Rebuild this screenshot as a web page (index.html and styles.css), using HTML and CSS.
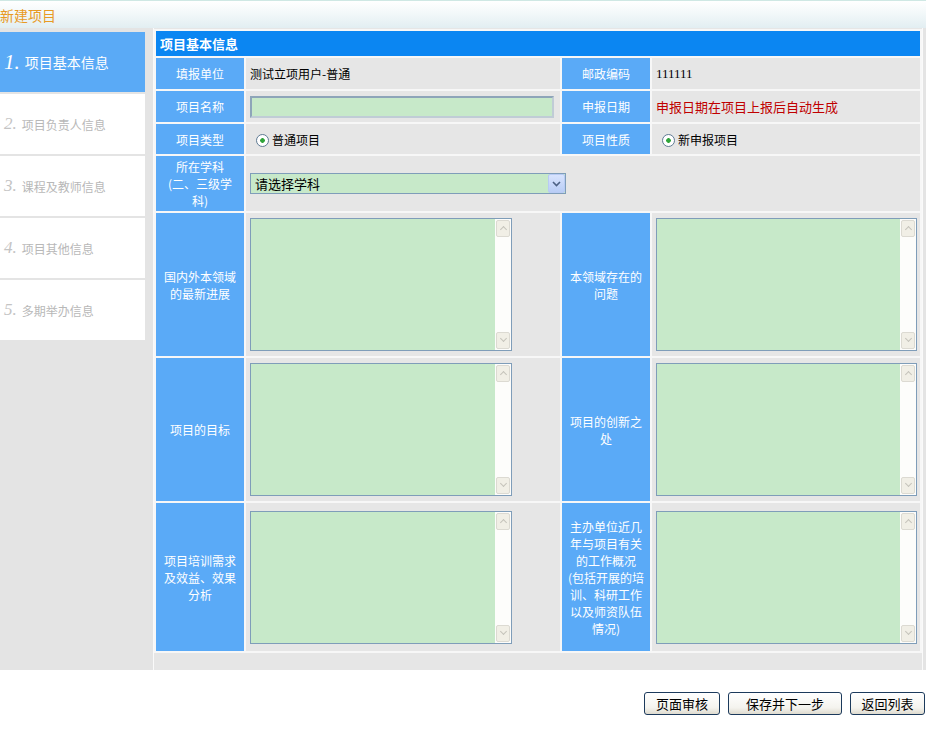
FILE: index.html
```html
<!DOCTYPE html>
<html>
<head>
<meta charset="utf-8">
<title>新建项目</title>
<link rel="stylesheet" href="styles.css">
</head>
<body>
<div class="topbar">新建项目</div>
<div class="wrap">
  <ul class="side">
    <li class="step on"><i>1.</i>项目基本信息</li>
    <li class="step"><i>2.</i>项目负责人信息</li>
    <li class="step"><i>3.</i>课程及教师信息</li>
    <li class="step"><i>4.</i>项目其他信息</li>
    <li class="step"><i>5.</i>多期举办信息</li>
  </ul>
  <div class="main">
    <table class="info">
      <colgroup>
        <col class="c-lab"><col class="c-val1"><col class="c-lab"><col class="c-val2">
      </colgroup>
      <tr class="r-head"><th colspan="4">项目基本信息</th></tr>
      <tr class="r1">
        <td class="lab">填报单位</td>
        <td class="val">测试立项用户-普通</td>
        <td class="lab">邮政编码</td>
        <td class="val num">111111</td>
      </tr>
      <tr class="r2">
        <td class="lab">项目名称</td>
        <td class="val"><input type="text" class="txt"></td>
        <td class="lab">申报日期</td>
        <td class="val red">申报日期在项目上报后自动生成</td>
      </tr>
      <tr class="r3">
        <td class="lab">项目类型</td>
        <td class="val"><span class="radio"></span>普通项目</td>
        <td class="lab">项目性质</td>
        <td class="val"><span class="radio"></span>新申报项目</td>
      </tr>
      <tr class="r4">
        <td class="lab">所在学科<br>(二、三级学<br>科)</td>
        <td class="val" colspan="3">
          <span class="sel">
            <select><option>请选择学科</option></select>
            <span class="sel-btn"><svg width="9" height="6" viewBox="0 0 9 6"><path d="M1 1l3.5 3.5L8 1" fill="none" stroke="#4d6185" stroke-width="1.6"/></svg></span>
          </span>
        </td>
      </tr>
      <tr class="r-big">
        <td class="lab">国内外本领域<br>的最新进展</td>
        <td class="val"><div class="ta"><textarea></textarea><div class="sbar"><span class="up"></span><span class="dn"></span></div></div></td>
        <td class="lab">本领域存在的<br>问题</td>
        <td class="val"><div class="ta ta2"><textarea></textarea><div class="sbar"><span class="up"></span><span class="dn"></span></div></div></td>
      </tr>
      <tr class="r-big">
        <td class="lab">项目的目标</td>
        <td class="val"><div class="ta"><textarea></textarea><div class="sbar"><span class="up"></span><span class="dn"></span></div></div></td>
        <td class="lab">项目的创新之<br>处</td>
        <td class="val"><div class="ta ta2"><textarea></textarea><div class="sbar"><span class="up"></span><span class="dn"></span></div></div></td>
      </tr>
      <tr class="r-last">
        <td class="lab">项目培训需求<br>及效益、效果<br>分析</td>
        <td class="val"><div class="ta"><textarea></textarea><div class="sbar"><span class="up"></span><span class="dn"></span></div></div></td>
        <td class="lab">主办单位近几<br>年与项目有关<br>的工作概况<br>(包括开展的培<br>训、科研工作<br>以及师资队伍<br>情况)</td>
        <td class="val"><div class="ta ta2"><textarea></textarea><div class="sbar"><span class="up"></span><span class="dn"></span></div></div></td>
      </tr>
    </table>
  </div>
</div>
<div class="btns">
  <button class="b1">页面审核</button>
  <button class="b2">保存并下一步</button>
  <button class="b3">返回列表</button>
</div>
</body>
</html>
```

FILE: styles.css
```css
body {
  margin: 0;
  padding: 0;
  font-family: "Noto Sans CJK SC", "DejaVu Sans", sans-serif;
  font-size: 12px;
  color: #000;
  background: #fff;
}
.topbar {
  height: 27px;
  line-height: 28px;
  border-top: 1px solid #cfe8e4;
  background: linear-gradient(#ffffff, #f4f9fa 40%, #e2eef2);
  color: #e89a24;
  font-size: 14px;
  padding-left: 0;
}
.wrap {
  display: flex;
  height: 642px;
  background: #e4e4e4;
}
.side {
  list-style: none;
  margin: 0;
  padding: 4px 0 0;
  width: 145px;
  flex: none;
}
.step {
  height: 60px;
  margin-bottom: 2px;
  background: #fff;
  color: #b8b8b8;
  display: flex;
  align-items: center;
  padding-left: 4px;
  font-size: 12px;
}
.step i {
  font-family: "Liberation Serif", serif;
  font-size: 17px;
  color: #c4c4c4;
  margin-right: 5px;
}
.step.on {
  background: #5aaaf6;
  color: #fff;
  font-size: 14px;
}
.step.on i {
  font-size: 21px;
  color: #fff;
  margin-right: 5px;
}
.main {
  margin-left: 8px;
  width: 768px;
  border-left: 1px solid #fafafa;
  border-right: 1px solid #fafafa;
  padding-top: 1px;
  background: #e6e6e6;
}
.info {
  width: 100%;
  border-collapse: separate;
  border-spacing: 2px;
  background: #f7f7f7;
}
.c-lab { width: 88px; }
.c-val1 { width: 314px; }
.info th {
  height: 25px;
  padding: 0 0 0 4px;
  background: #0b86f2;
  color: #fff;
  text-align: left;
  font-size: 13px;
  font-weight: bold;
}
.info td {
  padding: 0;
}
.lab {
  background: #5aaaf7;
  color: #fff;
  text-align: center;
  line-height: 17px;
}
.val {
  background: #e6e6e6;
  padding-left: 4px !important;
}
.r1 td { height: 31px; }
.r2 td { height: 31px; }
.r3 td { height: 30px; }
.r4 td { height: 55px; }
.r-big td { height: 143px; }
.r-last td { height: 148px; }
.num {
  font-family: "Liberation Serif", serif;
  font-size: 13px;
}
.red {
  color: #c00000;
  font-size: 13px;
}
.txt {
  display: block;
  width: 300px;
  height: 18px;
  margin: 0;
  padding: 0;
  border: 2px solid #8ea5b9;
  border-right-color: #c0ccd6;
  border-bottom-color: #c0ccd6;
  background: #c7e9c9;
}
.radio {
  display: inline-block;
  width: 11px;
  height: 11px;
  border: 1px solid #5f7b94;
  border-radius: 50%;
  background: radial-gradient(circle, #2fa43a 0, #2fa43a 2px, #fff 2.6px);
  vertical-align: -2px;
  margin: 0 3px 0 6px;
}
.sel {
  position: relative;
  display: block;
  width: 316px;
  height: 21px;
}
.sel select {
  -webkit-appearance: none;
  appearance: none;
  display: block;
  width: 316px;
  height: 21px;
  border: 1px solid #7f9db9;
  background: #c7e9c9;
  font-family: inherit;
  font-size: 13px;
  padding: 0 0 0 4px;
  margin: 0;
  border-radius: 0;
  color: #000;
}
.sel-btn {
  position: absolute;
  right: 1px;
  top: 1px;
  width: 15px;
  height: 17px;
  border: 1px solid #b8cbf4;
  border-radius: 2px;
  background: linear-gradient(#d8e3fd, #b9cdf6);
  display: flex;
  align-items: center;
  justify-content: center;
}
.ta {
  display: flex;
  width: 260px;
  height: 131px;
  border: 1px solid #7f9db9;
  background: #c7e9c9;
}
.ta2 { width: 259px; }
.ta textarea {
  flex: 1;
  border: none;
  margin: 0;
  padding: 0;
  background: #c7e9c9;
  resize: none;
  outline: none;
}
.sbar {
  width: 16px;
  flex: none;
  background: #fdfdfb;
  display: flex;
  flex-direction: column;
  justify-content: space-between;
}
.sbar span {
  height: 15px;
  margin: 1px;
  border: 1px solid #dcdad2;
  border-radius: 2px;
  background: #f1efe6;
  position: relative;
}
.sbar span:after {
  content: "";
  position: absolute;
  left: 4px;
  width: 4px;
  height: 4px;
  border-left: 1px solid #c5c3bb;
  border-top: 1px solid #c5c3bb;
}
.sbar .up:after {
  top: 6px;
  transform: rotate(45deg);
}
.sbar .dn:after {
  top: 3px;
  transform: rotate(225deg);
}
.btns {
  display: flex;
  justify-content: flex-end;
  gap: 8px;
  padding: 22px 1px 0 0;
}
.btns button {
  height: 23px;
  padding: 0;
  border: 1px solid #1c3a5c;
  border-radius: 3px;
  background: linear-gradient(#ffffff, #f4f3ee 70%, #dedbcf);
  font-family: inherit;
  font-size: 13px;
  color: #000;
}
.b1 { width: 76px; }
.b2 { width: 114px; }
.b3 { width: 75px; }
```
